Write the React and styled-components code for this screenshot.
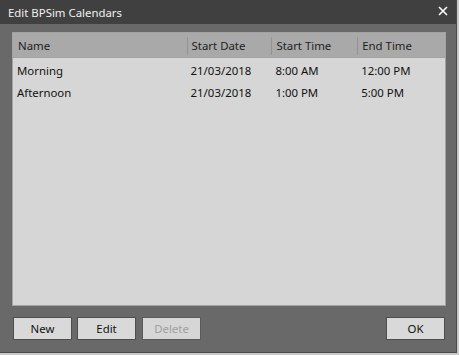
import React from 'react';
import styled, { createGlobalStyle } from 'styled-components';

const GlobalStyle = createGlobalStyle`
  html, body {
    margin: 0;
    padding: 0;
    background: #c8c8c8;
  }
  body {
    font-family: "Noto Sans", "Open Sans", "DejaVu Sans", sans-serif;
    font-size: 11.4px;
  }
`;

const rows = [
  { name: 'Morning', date: '21/03/2018', start: '8:00 AM', end: '12:00 PM' },
  { name: 'Afternoon', date: '21/03/2018', start: '1:00 PM', end: '5:00 PM' },
];

const columns = [
  { key: 'name', label: 'Name', width: 174 },
  { key: 'date', label: 'Start Date', width: 85 },
  { key: 'start', label: 'Start Time', width: 86 },
  { key: 'end', label: 'End Time', width: 88 },
];

function App() {
  return (
    <>
      <GlobalStyle />
      <Window>
        <TitleBar>
          <Title>Edit BPSim Calendars</Title>
          <CloseButton aria-label="Close">
            <svg width="10" height="10" viewBox="0 0 10 10">
              <path d="M1 1 L9 9 M9 1 L1 9" stroke="#fff" strokeWidth="1.6" />
            </svg>
          </CloseButton>
        </TitleBar>
        <Body>
          <List>
            <HeaderRow>
              {columns.map((c) => (
                <HeaderCell key={c.key} $width={c.width}>{c.label}</HeaderCell>
              ))}
            </HeaderRow>
            <Rows>
              {rows.map((r) => (
                <Row key={r.name}>
                  {columns.map((c) => (
                    <Cell key={c.key} $width={c.width}>{r[c.key]}</Cell>
                  ))}
                </Row>
              ))}
            </Rows>
          </List>
          <Footer>
            <ButtonGroup>
              <Button>New</Button>
              <Button>Edit</Button>
              <Button disabled>Delete</Button>
            </ButtonGroup>
            <Button>OK</Button>
          </Footer>
        </Body>
      </Window>
    </>
  );
}

const Window = styled.div`
  box-sizing: border-box;
  width: 457px;
  height: 353px;
  display: flex;
  flex-direction: column;
  background: #696969;
  border-right: 1px solid #4a4a4a;
  border-bottom: 1px solid #4a4a4a;
`;

const TitleBar = styled.div`
  height: 24px;
  flex: none;
  display: flex;
  align-items: center;
  justify-content: space-between;
  background: #404040;
  padding: 0 0 0 8px;
`;

const Title = styled.span`
  color: #f0f0f0;
  font-size: 11.4px;
  margin-top: 1px;
`;

const CloseButton = styled.div`
  width: 26px;
  height: 24px;
  display: flex;
  align-items: center;
  justify-content: center;
  margin-top: -2px;
`;

const Body = styled.div`
  flex: 1;
  display: flex;
  flex-direction: column;
  padding: 8px 10px 12px 12px;
`;

const List = styled.div`
  flex: 1;
  background: #d6d6d6;
  border: 1px solid #a3a3a3;
`;

const HeaderRow = styled.div`
  display: flex;
  height: 24px;
  background: #a9a9a9;
  border-bottom: 1px solid #a3a3a3;
`;

const HeaderCell = styled.div`
  box-sizing: border-box;
  width: ${(p) => p.$width}px;
  display: flex;
  align-items: center;
  padding-left: 5px;
  color: #1e1e1e;
  position: relative;

  &:not(:first-child)::before {
    content: '';
    position: absolute;
    left: 0;
    top: 4px;
    bottom: 2px;
    width: 1px;
    background: #949494;
  }
`;

const Rows = styled.div`
  padding-top: 1px;
`;

const Row = styled.div`
  display: flex;
  height: 22px;
  align-items: center;
`;

const Cell = styled.div`
  box-sizing: border-box;
  width: ${(p) => p.$width}px;
  padding-left: 4px;
  color: #111;
`;

const Footer = styled.div`
  display: flex;
  justify-content: space-between;
  margin-top: 11px;
  padding-right: 1px;
`;

const ButtonGroup = styled.div`
  display: flex;
  gap: 5px;
  margin-left: 1px;
  & > button:last-child {
    margin-left: 1px;
  }
`;

const Button = styled.button`
  box-sizing: border-box;
  width: 59px;
  height: 23px;
  background: #d9d9d9;
  border: 1px solid #4e4e4e;
  border-radius: 0;
  font-family: inherit;
  font-size: 11.4px;
  color: #111;
  padding: 0;

  &:disabled {
    color: #a0a0a0;
    background: #d6d6d6;
    border-color: #5a5a5a;
  }
`;

export default App;
